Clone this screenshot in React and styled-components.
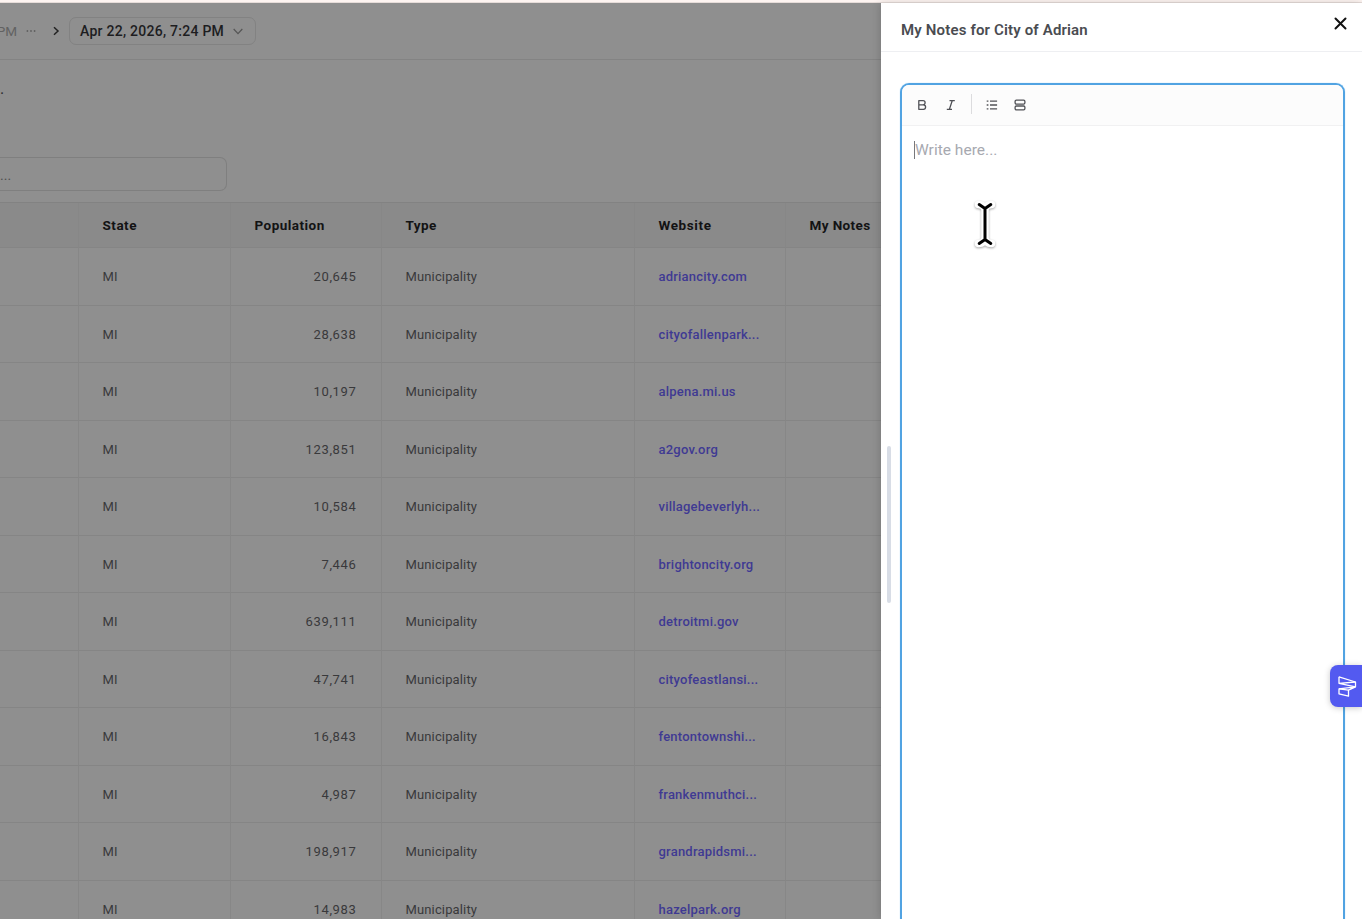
import React from 'react';
import styled, { createGlobalStyle } from 'styled-components';

const GlobalStyle = createGlobalStyle`
  * { box-sizing: border-box; }
  body {
    margin: 0;
    overflow: hidden;
    font-family: Roboto, "Liberation Sans", sans-serif;
    font-size: 13px;
    background: #fff;
  }
`;

const Screen = styled.div`
  display: flex;
  flex-direction: column;
  width: 1362px;
  height: 919px;
  overflow: hidden;
`;

const TopStrip = styled.div`
  flex: none;
  height: 3px;
  background: #fdf4f1;
  border-bottom: 1px solid #e6dcd9;
`;

const Body = styled.div`
  display: flex;
  flex: 1;
  min-height: 0;
`;

const Main = styled.main`
  width: 881px;
  flex: none;
  overflow: hidden;
  background: #8f8f8f;
`;

const Breadcrumbs = styled.nav`
  display: flex;
  align-items: center;
  height: 57px;
  border-bottom: 1px solid #838383;
`;

const Crumb = styled.span`
  width: 17px;
  display: flex;
  justify-content: flex-end;
  font-size: 13.5px;
  white-space: nowrap;
  color: #626262;
`;

const CrumbIcon = styled.svg`
  flex: none;
  margin-left: ${(p) => p.$gap}px;
`;

const DateSelect = styled.button`
  display: flex;
  align-items: center;
  justify-content: space-between;
  width: 187px;
  height: 28px;
  margin-left: 8px;
  padding: 0 12px 0 10px;
  border: 1px solid #828282;
  border-radius: 7px;
  background: transparent;
  font: 500 14px Roboto, sans-serif;
  letter-spacing: 0.26px;
  color: #1d1d1f;
  white-space: nowrap;
`;

const Intro = styled.section`
  height: 97px;
  padding-top: 19px;
  font-size: 16px;
  line-height: 20px;
  color: #2c2c2e;
`;

const SearchRow = styled.div`
  height: 45px;
`;

const SearchBox = styled.div`
  display: flex;
  align-items: center;
  width: 227px;
  height: 34px;
  border: 1px solid #7f7f7f;
  border-left: 0;
  border-radius: 0 7px 7px 0;
  padding-top: 2px;
  font-size: 14px;
  color: #505050;
`;

const Table = styled.div`
  border-top: 1px solid #828282;
`;

const Row = styled.div`
  display: grid;
  grid-template-columns: 78.5px 152px 151px 253px 151px 96px;
  height: ${(p) => (p.$head ? 45.4 : 57.5)}px;
  background: ${(p) => (p.$head ? '#8a8a8a' : 'transparent')};
`;

const Cell = styled.div`
  display: flex;
  align-items: center;
  justify-content: ${(p) => (p.$right ? 'flex-end' : 'flex-start')};
  padding: 0 24px;
  border-right: 1px solid #878787;
  border-bottom: 1px solid #858585;
  color: #39393b;
  white-space: nowrap;
  letter-spacing: ${(p) => (p.$right ? 0.65 : 0.14)}px;
`;

const HeadCell = styled(Cell)`
  font-weight: 700;
  font-size: 13.5px;
  letter-spacing: ${(p) => p.$track}px;
  color: #131314;
`;

const SiteLink = styled.a`
  font-weight: 500;
  color: #3f3a93;
  letter-spacing: 0.22px;
`;

const Drawer = styled.aside`
  display: flex;
  flex-direction: column;
  flex: 1;
  background: #fff;
  box-shadow: -1px 0 8px rgba(0, 0, 0, 0.16);
  position: relative;
`;

const DrawerHeader = styled.header`
  display: flex;
  justify-content: space-between;
  flex: none;
  height: 49px;
  padding: 17px 14px 0 20px;
  border-bottom: 1px solid #eeeff2;
`;

const DrawerTitle = styled.h1`
  margin: 0;
  font-size: 15px;
  line-height: 20px;
  font-weight: 600;
  letter-spacing: 0.16px;
  color: #4a4c51;
`;

const CloseButton = styled.button`
  width: 14px;
  height: 14px;
  margin-top: -3px;
  padding: 0;
  border: 0;
  background: none;
  svg { display: block; }
`;

const DrawerContent = styled.div`
  display: flex;
  flex: 1;
  min-height: 0;
  padding: 31px 17px 0 6px;
`;

const ResizeHandle = styled.div`
  flex: none;
  width: 4px;
  height: 157px;
  margin: 363px 9px 0 0;
  border-radius: 2px;
  background: #d8dde6;
`;

const Editor = styled.section`
  flex: 1;
  border: 2px solid #51a3e2;
  border-bottom: 0;
  border-radius: 9px 9px 0 0;
  box-shadow: 0 0 1px #7cc4f5;
  overflow: hidden;
`;

const Toolbar = styled.div`
  display: flex;
  align-items: center;
  height: 41px;
  padding: 0 13px;
  background: #fcfcfc;
  border-bottom: 1px solid #f1f1f2;
`;

const ToolButton = styled.button`
  width: 14px;
  height: 14px;
  margin-right: ${(p) => p.$gap}px;
  padding: 0;
  border: 0;
  background: none;
  svg { display: block; }
`;

const ToolDivider = styled.i`
  width: 1px;
  height: 20px;
  margin: -3px 13px 0 0;
  background: #dcdcde;
`;

const Placeholder = styled.div`
  display: flex;
  align-items: center;
  height: 18px;
  margin: 15px 0 0 12px;
  border-left: 1px solid #77787c;
  font-size: 15.5px;
  letter-spacing: 0.02px;
  color: #a7a9b0;
`;

const PointerCursor = styled.svg`
  position: absolute;
  left: 89.5px;
  top: 194px;
  filter: drop-shadow(0 1px 1px rgba(0, 0, 0, 0.35));
`;

const FloatingTab = styled.div`
  position: absolute;
  right: 0;
  top: 662px;
  width: 32px;
  height: 42px;
  border-radius: 8px 0 0 8px;
  background: #535af0;
  box-shadow: 0 1px 6px rgba(0, 0, 0, 0.22);
  svg { display: block; }
`;

const headers = [
  ['', 0],
  ['State', 0.5],
  ['Population', 0.47],
  ['Type', 0.4],
  ['Website', 0.6],
  ['My Notes', 0.4],
];

const rows = [
  ['20,645', 'adriancity.com'],
  ['28,638', 'cityofallenpark...'],
  ['10,197', 'alpena.mi.us'],
  ['123,851', 'a2gov.org'],
  ['10,584', 'villagebeverlyh...'],
  ['7,446', 'brightoncity.org'],
  ['639,111', 'detroitmi.gov'],
  ['47,741', 'cityofeastlansi...'],
  ['16,843', 'fentontownshi...'],
  ['4,987', 'frankenmuthci...'],
  ['198,917', 'grandrapidsmi...'],
  ['14,983', 'hazelpark.org'],
];

function ToolIcon({ children }) {
  return (
    <svg width="14" height="14" viewBox="0 0 14 14" fill="none" stroke="#505156" strokeWidth="1.3" strokeLinejoin="round">
      {children}
    </svg>
  );
}

export default function App() {
  return (
    <Screen>
      <GlobalStyle />
      <TopStrip />
      <Body>
        <Main>
          <Breadcrumbs>
            <Crumb>PM</Crumb>
            <CrumbIcon $gap={9} width="10" height="4" viewBox="0 0 10 4" fill="#606060">
              <circle cx="1.4" cy="2" r="0.9" />
              <circle cx="5" cy="2" r="0.9" />
              <circle cx="8.6" cy="2" r="0.9" />
            </CrumbIcon>
            <CrumbIcon $gap={16} width="9" height="10" viewBox="0 0 9 10" fill="none" stroke="#222" strokeWidth="1.5">
              <path d="M2 1.2 6 5 2 8.8" />
            </CrumbIcon>
            <DateSelect>
              Apr 22, 2026, 7:24 PM
              <svg width="10" height="7" viewBox="0 0 10 7" fill="none" stroke="#555" strokeWidth="1.2">
                <path d="M.7 1 5 5.6 9.3 1" />
              </svg>
            </DateSelect>
          </Breadcrumbs>
          <Intro>.</Intro>
          <SearchRow>
            <SearchBox>...</SearchBox>
          </SearchRow>
          <Table>
            <Row $head>
              {headers.map(([label, track]) => (
                <HeadCell key={label} $track={track}>{label}</HeadCell>
              ))}
            </Row>
            {rows.map(([population, site]) => (
              <Row key={site}>
                <Cell />
                <Cell>MI</Cell>
                <Cell $right>{population}</Cell>
                <Cell>Municipality</Cell>
                <Cell><SiteLink>{site}</SiteLink></Cell>
                <Cell />
              </Row>
            ))}
          </Table>
        </Main>
        <Drawer>
          <DrawerHeader>
            <DrawerTitle>My Notes for City of Adrian</DrawerTitle>
            <CloseButton aria-label="Close">
              <svg width="14" height="14" viewBox="0 0 14 14" stroke="#111" strokeWidth="2" strokeLinecap="round">
                <path d="M1.5 1.5 11.5 11.5M11.5 1.5 1.5 11.5" />
              </svg>
            </CloseButton>
          </DrawerHeader>
          <DrawerContent>
            <ResizeHandle />
            <Editor>
              <Toolbar>
                <ToolButton $gap={15} aria-label="Bold">
                  <ToolIcon>
                    <path d="M3.8 2.7H8a2 2 0 0 1 0 4.2H3.8zM3.8 6.9h4.6a2.2 2.2 0 0 1 0 4.4H3.8z" />
                  </ToolIcon>
                </ToolButton>
                <ToolButton $gap={13} aria-label="Italic">
                  <ToolIcon>
                    <path d="M5.5 2.7H10.8M2.8 11.3H8M8.2 2.7 5.4 11.3" />
                  </ToolIcon>
                </ToolButton>
                <ToolDivider />
                <ToolButton $gap={14} aria-label="Bulleted list">
                  <ToolIcon>
                    <path d="M5 3.2h7.1M5 7h7.1M5 10.8h7.1M1.7 3.2h1.7M1.7 7h1.7M1.7 10.8h1.7" />
                  </ToolIcon>
                </ToolButton>
                <ToolButton $gap={0} aria-label="Blocks">
                  <ToolIcon>
                    <rect x="2.1" y="2.2" width="9.8" height="3.9" rx="1.3" />
                    <rect x="2.1" y="8" width="9.8" height="3.9" rx="1.3" />
                  </ToolIcon>
                </ToolButton>
              </Toolbar>
              <Placeholder>Write here...</Placeholder>
            </Editor>
          </DrawerContent>
          <PointerCursor width="28" height="54" viewBox="0 0 28 54" fill="none" strokeLinecap="round">
            <path d="M7.5 7.5c4 0 6.500 2 6.500 5.500v28c0 3.500-2.500 5.500-6.500 5.500M20.500 7.500c-4 0-6.500 2-6.500 5.500M14 41c0 3.500 2.500 5.500 6.500 5.500" stroke="#fff" strokeWidth="7.5" />
            <path d="M8.200 7.500 14 11.500V42.500L8.200 46.500M19.800 7.500 14 11.500M14 42.500 19.800 46.500" stroke="#000" strokeWidth="3" strokeLinejoin="round" />
          </PointerCursor>
          <FloatingTab>
            <svg width="32" height="42" viewBox="0 0 32 42" fill="none" stroke="#fff" strokeWidth="1.3" strokeLinejoin="round">
              <path d="M9 11.8 25.5 17V21.8L18.5 25.200V31.200L9 28.800V23.800L25.500 21.800" />
              <path d="M9 11.800V18.300L25.500 17M9 18.300 25.500 21.800M9 23.800 18.500 25.200" />
            </svg>
          </FloatingTab>
        </Drawer>
      </Body>
    </Screen>
  );
}
